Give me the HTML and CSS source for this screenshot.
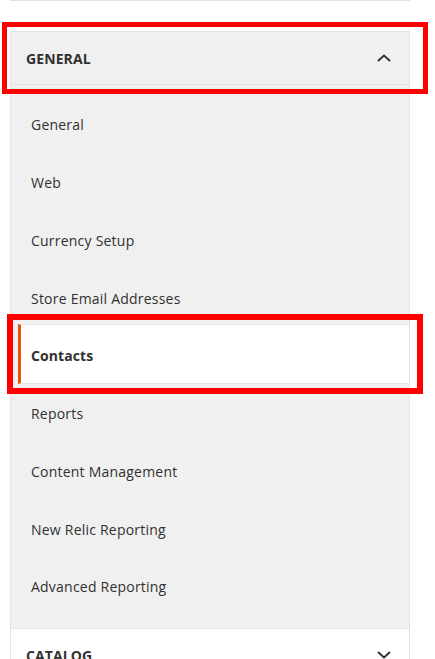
FILE: index.html
```html
<!DOCTYPE html>
<html>
<head>
<meta charset="utf-8">
<link rel="stylesheet" href="styles.css">
</head>
<body>
<div class="prev"></div>
<div class="nav">
  <div class="section">
    <div class="section-title open">
      <span>GENERAL</span>
      <svg class="chev" width="14" height="8" viewBox="0 0 14 8"><path d="M1 7 L7 1.5 L13 7" fill="none" stroke="#303030" stroke-width="1.8"/></svg>
    </div>
    <ul class="items">
      <li class="item"><a>General</a></li>
      <li class="item"><a>Web</a></li>
      <li class="item"><a>Currency Setup</a></li>
      <li class="item"><a>Store Email Addresses</a></li>
      <li class="item active"><a>Contacts</a></li>
      <li class="item"><a>Reports</a></li>
      <li class="item"><a>Content Management</a></li>
      <li class="item"><a>New Relic Reporting</a></li>
      <li class="item"><a>Advanced Reporting</a></li>
    </ul>
  </div>
  <div class="section">
    <div class="section-title">
      <span>CATALOG</span>
      <svg class="chev" width="14" height="8" viewBox="0 0 14 8"><path d="M1 1 L7 6.5 L13 1" fill="none" stroke="#303030" stroke-width="1.8"/></svg>
    </div>
  </div>
</div>
<div class="mark mark-head"></div>
<div class="mark mark-item"></div>
</body>
</html>
```

FILE: styles.css
```css
html, body {
  margin: 0;
  padding: 0;
  background: #fff;
  font-family: "Open Sans", "Liberation Sans", sans-serif;
  color: #303030;
  overflow: hidden;
}
.prev {
  width: 400px;
  margin-left: 10px;
  height: 0;
  border-bottom: 1px solid #e3e3e3;
}
.nav {
  width: 400px;
  margin-left: 10px;
  margin-top: 30px;
}
.section {
  border: 1px solid #e3e3e3;
  border-bottom: none;
}
.section-title {
  height: 53px;
  box-sizing: border-box;
  display: flex;
  align-items: center;
  justify-content: space-between;
  padding: 0 18px 0 15px;
  font-size: 14px;
  font-weight: 700;
  letter-spacing: 0.1px;
  background: #fff;
}
.section-title.open {
  background: #f0f0f0;
  border-bottom: 1px solid #e3e3e3;
}
.chev {
  display: block;
}
.items {
  list-style: none;
  margin: 0;
  padding: 10px 0 13px;
  background: #f0f0f0;
}
.item {
  margin-left: 7px;
  height: 57.75px;
  box-sizing: border-box;
  border-top: 1px solid transparent;
  border-bottom: 1px solid transparent;
  border-left: 3px solid transparent;
  display: flex;
  align-items: center;
  font-size: 14px;
  letter-spacing: 0.22px;
}
.item a {
  padding-left: 10px;
  padding-top: 2px;
}
.item.active {
  background: #fff;
  border-color: #e3e3e3;
  border-right: none;
  border-left-color: #eb5202;
  font-weight: 700;
  letter-spacing: 0.1px;
  margin-top: -2px;
  height: 59.75px;
}
.item.active a {
  padding-top: 3px;
}
.mark {
  position: absolute;
  border: 5px solid #ff0000;
  box-sizing: border-box;
}
.mark-head {
  left: 2px;
  top: 22px;
  width: 426px;
  height: 72px;
}
.mark-item {
  left: 7px;
  top: 314px;
  width: 416px;
  height: 80px;
  border-width: 6px;
}
```
